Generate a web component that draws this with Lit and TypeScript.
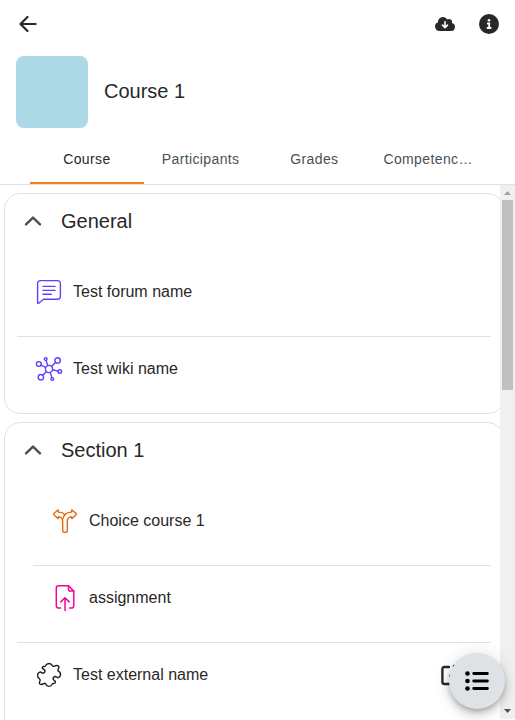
import { LitElement, html, css, svg } from "lit";
import { customElement, property } from "lit/decorators.js";

const glyphs: Record<string, unknown> = {
  forum: svg`<g stroke="#5b40ff" stroke-width="1.4">
    <path d="M5.6 2.6H22.2Q25.4 2.6 25.4 5.8V18.1Q25.4 21.3 22.2 21.3H8.6L3.6 25.2Q2.6 25.9 2.6 24.7V5.6Q2.6 2.6 5.6 2.6Z"/>
    <path d="M8 8.4H20M8 12.4H20M8 16.3H16.3"/></g>`,
  wiki: svg`<g stroke="#5b40ff" stroke-width="1.4">
    <circle cx="14" cy="14" r="3.6"/><circle cx="3.8" cy="9" r="2.4"/>
    <circle cx="10.7" cy="4" r="1.4"/><circle cx="22.6" cy="5.4" r="2.7"/>
    <circle cx="24.8" cy="16.5" r="1.8"/><circle cx="17.3" cy="24" r="1.4"/>
    <circle cx="5.9" cy="22.2" r="2.7"/>
    <path d="M6 10.2L10.7 12.4M11.1 5.4L12.7 10.6M20.7 7.3L16.6 11.5M17.6 14.8L23 16.1M15.2 17.4L16.9 22.6M7.8 20.3L11.5 16.5"/></g>`,
  choice: svg`<g stroke="#e8680c" stroke-width="1.4">
    <path d="M11.7 23.4V14.4Q11.7 10.2 7.4 9.6V10.9Q7.4 12 6.6 11.2L2.9 7.8Q2.3 7.2 2.9 6.6L6.6 3.2Q7.4 2.4 7.4 3.5V5.1Q12 5.1 14 7.8Q16 5.1 20.6 5.1V3.5Q20.6 2.4 21.4 3.2L25.1 6.6Q25.7 7.2 25.1 7.8L21.4 11.2Q20.6 12 20.6 10.9V9.6Q16.3 10.2 16.3 14.4V23.4Q16.3 25.4 14 25.4Q11.7 25.4 11.7 23.4Z"/>
    <path d="M14 7.8Q12.6 9.4 12.1 11.4"/></g>`,
  assign: svg`<g stroke="#f7049b" stroke-width="1.5">
    <path d="M9.6 24.1H8Q5.3 24.1 5.3 21.4V4Q5.3 1.8 7.5 1.8H17.5L22.8 7.1V21.4Q22.8 24.1 20.1 24.1H18.5"/>
    <path d="M17.5 1.8V5.3Q17.5 7.1 19.3 7.1H22.8M14 26.5V13.9M9.8 17.9L14 13.7L18.2 17.9"/></g>`,
  puzzle: svg`<path stroke="#1d2125" stroke-width="1.4" d="M10.6 4.6Q11.6 2.5 14 2.5Q16.4 2.5 17.4 4.6Q18.1 5.8 19.4 5.2Q21 4.2 22.8 4.7Q24.5 5.5 23.7 7.2Q22.4 8.8 23 9.9Q25.5 10.8 25.5 13.6Q25.4 15.8 23.3 16.6Q22.4 16.9 21.7 16.1Q19.8 14.9 18.5 16.5Q17.4 18.2 19.2 19.5Q20.9 20.2 20.4 21.5Q19.8 22.7 18.2 22.4Q17.4 22.6 17 23.5Q16 25.4 13.6 25.4Q11.4 25 10.5 22.8Q9.7 21.8 8.7 22.6Q6.9 24 5.1 23.2Q3.7 22.2 4.7 20.6Q5.7 19.1 4.8 18.1Q2.5 16.7 2.5 14Q2.7 12 4.7 11.2Q5.8 10.8 6.5 11.7Q8.3 12.8 9.6 11.3Q10.7 9.5 8.9 8.3Q6.8 7.7 7.4 6.3Q8 5.1 9.4 5.6Q10.3 5.5 10.6 4.6Z"/>`,
};

@customElement("activity-row")
class ActivityRow extends LitElement {
  @property() icon = "";
  @property() label = "";
  @property({ type: Boolean }) link = false;
  static styles = css`
    :host { display: flex; height: 76px; border-bottom: 1px solid #dee2e6; box-sizing: content-box; }
    .line { display: flex; flex: 1; align-items: center; height: 28px; margin-top: 18px; padding-left: 18px; }
    .icon { width: 28px; height: 28px; flex: none; fill: none; stroke-linecap: round; stroke-linejoin: round; }
    .label { flex: 1; margin-left: 10px; line-height: 24px; }
    .open { width: 22px; height: 22px; margin-right: 29px; fill: none; stroke: #282828; stroke-width: 2.4; stroke-linecap: round; stroke-linejoin: round; }
  `;
  render() {
    return html`<div class="line">
      <svg class="icon" viewBox="0 0 28 28">${glyphs[this.icon]}</svg>
      <span class="label">${this.label}</span>
      ${this.link
        ? html`<svg class="open" viewBox="0 0 22 22"><path d="M9 3H4.5Q2.4 3 2.4 5V18Q2.4 20 4.5 20H17Q19 20 19 18V13M10 12L20 2M14 2H20V8"/></svg>`
        : ""}
    </div>`;
  }
}

@customElement("course-section")
class CourseSection extends LitElement {
  @property() heading = "";
  static styles = css`
    :host { display: block; box-sizing: border-box; border: 1px solid #dee2e6; border-radius: 16px; padding: 0 12px; }
    .head { display: flex; align-items: center; height: 54px; margin-bottom: 12px; }
    .chevron { width: 18px; height: 12px; margin: 0 19px 0 7px; fill: none; stroke: #495057; stroke-width: 2.4; stroke-linecap: round; stroke-linejoin: round; }
    .title { font-size: 20px; line-height: 24px; }
  `;
  render() {
    return html`<div class="head">
        <svg class="chevron" viewBox="0 0 18 12"><path d="M2 9.4L9 2.6L16 9.4"/></svg>
        <span class="title">${this.heading}</span>
      </div><slot></slot>`;
  }
}

@customElement("app-root")
class AppRoot extends LitElement {
  static styles = css`
    :host { display: flex; flex-direction: column; position: relative; width: 515px; height: 720px; overflow: hidden; background: #fff; color: #282828; font: 16px "Liberation Sans", Arial, sans-serif; }
    .toolbar { display: flex; align-items: center; height: 48px; padding: 0 16px; box-sizing: border-box; flex: none; }
    .back { width: 24px; height: 24px; fill: none; stroke: #282828; stroke-width: 2.2; stroke-linecap: round; stroke-linejoin: round; }
    .actions { display: flex; gap: 24px; margin-left: auto; align-items: center; }
    .actions svg { width: 20px; height: 20px; display: block; }
    .banner { display: flex; align-items: center; gap: 16px; height: 72px; padding: 8px 16px; flex: none; }
    .thumb { width: 72px; height: 72px; border-radius: 8px; background: #add8e6; }
    .name { font-size: 20px; line-height: 24px; margin-top: -2px; }
    .tabs { display: flex; height: 48px; padding: 0 30px; border-bottom: 1px solid #dee2e6; flex: none; }
    .tab { flex: 1; box-sizing: border-box; text-align: center; font-size: 14px; line-height: 46px; letter-spacing: .38px; color: #495057; border-bottom: 2px solid transparent; }
    .tab.on { color: #282828; border-color: #ff7f17; }
    .body { display: flex; flex: 1; min-height: 0; }
    .content { flex: 1; min-width: 0; overflow: hidden; padding: 8px 0 0 4px; }
    .content course-section { width: 500px; margin-bottom: 8px; }
    .content .tall { height: 360px; }
    .last, .nested.end { border-bottom: 0; }
    .nested { margin-left: 16px; }
    .rule { height: 1px; background: #dee2e6; }
    .bar { display: flex; flex-direction: column; align-items: center; width: 15px; height: 534px; background: #f0f0f0; }
    .bar svg { width: 15px; height: 15px; flex: none; }
    .thumbbar { width: 11px; height: 190px; background: #c0c0c0; }
    .bar .down { margin-top: auto; margin-bottom: 1px; }
    .fab { position: absolute; right: 10px; bottom: 11px; width: 56px; height: 56px; border-radius: 50%; background: #dee2e6; display: flex; align-items: center; justify-content: center; box-shadow: 0 3px 5px -1px rgba(0,0,0,.2), 0 6px 10px rgba(0,0,0,.14), 0 1px 18px rgba(0,0,0,.12); }
    .fab svg { width: 24px; height: 20px; }
  `;
  render() {
    return html`
      <div class="toolbar">
        <svg class="back" viewBox="0 0 24 24"><path d="M19.6 12H4.6M11.5 5L4.5 12L11.5 19"/></svg>
        <div class="actions">
          <svg viewBox="0 0 20 20"><path fill="#282828" d="M4.5 17A4.5 4.5 0 0 1 3 8.3A5 5 0 0 1 12.3 5.5A3 3 0 0 1 16.8 9.1A4 4 0 0 1 16 17Z"/><path d="M10 7.7V13.4M7.5 11.1L10 13.6L12.5 11.1" fill="none" stroke="#fff" stroke-width="1.6" stroke-linecap="round" stroke-linejoin="round"/></svg>
          <svg viewBox="0 0 20 20"><circle cx="10" cy="10" r="10" fill="#282828"/><circle cx="10" cy="6.2" r="1.3" fill="#fff"/><path d="M8.7 9.5H10.2V13.9M8.5 14H11.7" fill="none" stroke="#fff" stroke-width="1.8" stroke-linecap="round"/></svg>
        </div>
      </div>
      <div class="banner"><div class="thumb"></div><div class="name">Course 1</div></div>
      <div class="tabs">
        <div class="tab on">Course</div><div class="tab">Participants</div><div class="tab">Grades</div><div class="tab">Competenc…</div>
      </div>
      <div class="body">
        <div class="content">
          <course-section heading="General">
            <activity-row icon="forum" label="Test forum name"></activity-row>
            <activity-row class="last" icon="wiki" label="Test wiki name"></activity-row>
          </course-section>
          <course-section class="tall" heading="Section 1">
            <activity-row class="nested" icon="choice" label="Choice course 1"></activity-row>
            <activity-row class="nested end" icon="assign" label="assignment"></activity-row>
            <div class="rule"></div>
            <activity-row class="last" icon="puzzle" label="Test external name" link></activity-row>
          </course-section>
        </div>
        <div class="bar">
          <svg viewBox="0 0 15 15"><path d="M4 10L7.5 6L11 10Z" fill="#a3a3a3"/></svg>
          <div class="thumbbar"></div>
          <svg class="down" viewBox="0 0 15 15"><path d="M4 6L11 6L7.5 10Z" fill="#505050"/></svg>
        </div>
      </div>
      <div class="fab"><svg viewBox="0 0 24 20"><g stroke="#000" stroke-width="2.8" stroke-linecap="round"><path d="M8.7 2.5H22.4M8.7 10H22.4M8.7 17.5H22.4"/></g><circle cx="2.5" cy="2.5" r="2.3"/><circle cx="2.5" cy="10" r="2.3"/><circle cx="2.5" cy="17.5" r="2.3"/></svg></div>
    `;
  }
}
